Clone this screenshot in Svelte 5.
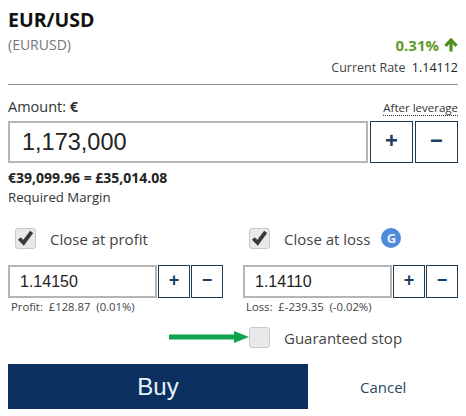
<script>
  let amount = "1,173,000";
  const stops = [
    { label: "Close at profit", value: "1.14150", note: "Profit:", money: "£128.87", pct: "(0.01%)" },
    { label: "Close at loss", value: "1.14110", note: "Loss:", money: "£-239.35", pct: "(-0.02%)", badge: true }
  ];
</script>

{#snippet tick()}
  <svg viewBox="0 0 20 20" width="20" height="20"><path d="M3.5 10.5 L8 15 L16.5 3.5" fill="none" stroke="#3a3a3a" stroke-width="4" /></svg>
{/snippet}

<main>
  <header>
    <div>
      <h1>EUR/USD</h1>
      <p class="code">(EURUSD)</p>
    </div>
    <div class="rate">
      <p class="change">0.31%
        <svg viewBox="0 0 14 14" width="14" height="14"><path d="M7 13.5 V2.5 M1.5 7.8 L7 2 L12.5 7.8" fill="none" stroke="#4f8f1c" stroke-width="3.2" /></svg>
      </p>
      <p class="current">Current Rate <span>1.14112</span></p>
    </div>
  </header>

  <div class="amount-head">
    <span>Amount: <b>€</b></span>
    <span class="leverage">After leverage</span>
  </div>
  <div class="amount-row">
    <input class="amount" value={amount} />
    <button class="step">+</button>
    <button class="step">−</button>
  </div>
  <p class="margin">€39,099.96 = £35,014.08</p>
  <p class="margin-label">Required Margin</p>

  <div class="stops">
    {#each stops as s}
      <div class="stop">
        <div class="check-row">
          <span class="check">{@render tick()}</span>
          <span class="check-label">{s.label}</span>
          {#if s.badge}<span class="badge">G</span>{/if}
        </div>
        <div class="stop-row">
          <input value={s.value} />
          <button class="step">+</button>
          <button class="step">−</button>
        </div>
        <p class="note">{s.note}&nbsp; {s.money}&nbsp; {s.pct}</p>
      </div>
    {/each}
  </div>

  <div class="guarantee">
    <svg class="arrow" viewBox="0 0 80 14" width="80" height="14"><path d="M0 4.5 H65 V1 L80 7 L65 13 V9.5 H0 Z" fill="#0fa34f" /></svg>
    <span class="check"></span>
    <span class="check-label">Guaranteed stop</span>
  </div>

  <div class="actions">
    <button class="buy">Buy</button>
    <button class="cancel">Cancel</button>
  </div>
</main>

<style>
  :global(body) {
    margin: 0;
    background: #fff;
  }

  main {
    width: 450px;
    height: 416px;
    padding: 0 8px;
    font-family: "Open Sans", sans-serif;
    font-size: 14px;
    color: #333;
    overflow: hidden;
  }

  p, h1 {
    margin: 0;
  }

  header {
    display: flex;
    justify-content: space-between;
    height: 84px;
    border-bottom: 1px solid #7f8f9b;
  }

  h1 {
    padding-top: 7px;
    font-size: 19.5px;
    line-height: 26px;
    color: #111;
  }

  .code {
    margin-top: 3px;
    font-size: 14px;
    line-height: 18px;
    color: #777;
  }

  .rate {
    text-align: right;
  }

  .change {
    display: flex;
    justify-content: flex-end;
    align-items: center;
    gap: 5px;
    margin-top: 35px;
    font-size: 15px;
    line-height: 20px;
    font-weight: 700;
    color: #5f9a2a;
  }

  .current {
    margin-top: 5px;
    font-size: 12.5px;
    line-height: 16px;
    color: #444;
  }

  .current span {
    margin-left: 3px;
    color: #222;
  }

  .amount-head {
    display: flex;
    justify-content: space-between;
    align-items: flex-end;
    box-sizing: border-box;
    height: 36px;
    padding-bottom: 4px;
    font-size: 14.5px;
    line-height: 20px;
  }

  .leverage {
    font-size: 11.5px;
    line-height: 14px;
    margin-bottom: 1px;
    border-bottom: 1px dotted #222;
  }

  .amount-row {
    display: flex;
    gap: 2px;
    height: 42px;
  }

  input {
    box-sizing: border-box;
    min-width: 0;
    border: 2px solid #b5b5b5;
    font-family: "Liberation Sans", sans-serif;
    color: #222;
    outline: none;
  }

  input.amount {
    width: 360px;
    padding: 0 12px;
    font-size: 23.5px;
  }

  .step {
    flex: 1;
    padding: 0 0 2px;
    border: 1px solid #1d3a50;
    background: #fff;
    font-family: "Liberation Sans", sans-serif;
    font-size: 22px;
    font-weight: 700;
    color: #1d3f60;
  }

  .margin {
    margin-top: 6px;
    font-size: 14px;
    line-height: 18px;
    font-weight: 700;
    color: #222;
  }

  .margin-label {
    margin-top: 2px;
    font-size: 13.2px;
    line-height: 17px;
  }

  .stops {
    display: flex;
    gap: 20px;
    margin-top: 21px;
  }

  .stop {
    width: 215px;
  }

  .check-row {
    display: flex;
    align-items: center;
    height: 22px;
    padding-left: 7px;
  }

  .stop:last-child .check-row {
    padding-left: 6px;
  }

  .check {
    box-sizing: border-box;
    display: inline-flex;
    flex: none;
    align-items: center;
    justify-content: center;
    width: 21px;
    height: 21px;
    border: 1px solid #c9c9c9;
    border-radius: 3px;
    background: #e9e9e9;
  }

  .check-label {
    margin-left: 14px;
    padding-top: 1px;
    font-size: 15px;
    color: #444;
  }

  .badge {
    display: inline-flex;
    align-items: center;
    justify-content: center;
    width: 20px;
    height: 20px;
    margin-left: 11px;
    border-radius: 50%;
    background: #4f8bdc;
    color: #e8f0fb;
    font-size: 13px;
    font-weight: 700;
  }

  .stop-row {
    display: flex;
    gap: 1px;
    height: 33px;
    margin-top: 16px;
  }

  .stop-row input {
    width: 149px;
    flex: none;
    padding: 0 10px;
    font-size: 16px;
  }

  .stop-row .step {
    font-size: 18px;
  }

  .note {
    margin-top: 1px;
    padding-left: 3px;
    font-size: 11.3px;
    line-height: 15px;
    color: #444;
  }

  .guarantee {
    display: flex;
    align-items: center;
    height: 22px;
    margin-top: 12px;
    padding-left: 161px;
  }

  .arrow {
    flex: none;
  }

  .actions {
    display: flex;
    align-items: center;
    margin-top: 16px;
  }

  .buy {
    width: 300px;
    height: 45px;
    border: 0;
    background: #0b3060;
    color: #e6f1fa;
    font-family: "Liberation Sans", sans-serif;
    font-size: 24px;
  }

  .cancel {
    margin-left: 52px;
    padding: 0;
    border: 0;
    background: none;
    color: #2a4a63;
    font-family: "Open Sans", sans-serif;
    font-size: 15px;
  }
</style>
